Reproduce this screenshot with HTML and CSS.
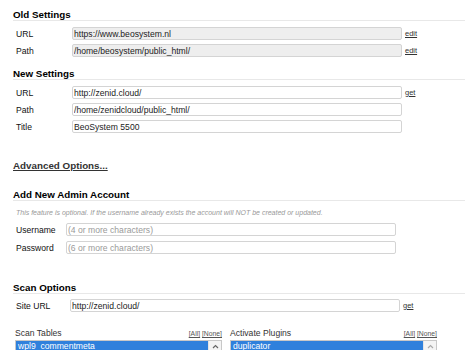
FILE: index.html
```html
<!DOCTYPE html>
<html lang="en">
<head>
    <meta charset="UTF-8">
    <title>Installer - Step 3</title>
    <link rel="stylesheet" href="styles.css">
</head>
<body>
    <h2 class="section-title first">Old Settings</h2>
    <div class="fields">
        <div class="row">
            <label for="old-url">URL</label>
            <input type="text" id="old-url" class="readonly" value="https://www.beosystem.nl" readonly>
            <a href="#" class="small-link">edit</a>
        </div>
        <div class="row">
            <label for="old-path">Path</label>
            <input type="text" id="old-path" class="readonly" value="/home/beosystem/public_html/" readonly>
            <a href="#" class="small-link">edit</a>
        </div>
    </div>

    <h2 class="section-title new-settings">New Settings</h2>
    <div class="fields">
        <div class="row">
            <label for="new-url">URL</label>
            <input type="text" id="new-url" value="http://zenid.cloud/">
            <a href="#" class="small-link">get</a>
        </div>
        <div class="row">
            <label for="new-path">Path</label>
            <input type="text" id="new-path" value="/home/zenidcloud/public_html/">
        </div>
        <div class="row">
            <label for="blogname">Title</label>
            <input type="text" id="blogname" value="BeoSystem 5500">
        </div>
    </div>

    <a href="#" class="advanced-link">Advanced Options...</a>

    <h2 class="section-title admin-title">Add New Admin Account</h2>
    <p class="note">This feature is optional. If the username already exists the account will NOT be created or updated.</p>
    <div class="fields admin-fields">
        <div class="row">
            <label for="admin-user">Username</label>
            <input type="text" id="admin-user" placeholder="(4 or more characters)">
        </div>
        <div class="row">
            <label for="admin-pass">Password</label>
            <input type="text" id="admin-pass" placeholder="(6 or more characters)">
        </div>
    </div>

    <h2 class="section-title scan-title">Scan Options</h2>
    <div class="fields site-fields">
        <div class="row">
            <label for="siteurl">Site URL</label>
            <input type="text" id="siteurl" value="http://zenid.cloud/">
            <a href="#" class="small-link">get</a>
        </div>
    </div>

    <div class="scan-cols">
        <div class="scan-col">
            <div class="col-head">
                <span>Scan Tables</span>
                <span class="toggles"><a href="#">[All]</a> <a href="#">[None]</a></span>
            </div>
            <div class="listbox">
                <div class="options">
                    <div class="option selected">wpl9_commentmeta</div>
                </div>
                <div class="scrollbar">
                    <div class="scroll-btn">
                        <svg width="7" height="5" viewBox="0 0 7 5"><polyline points="1,4 3.5,1.5 6,4" fill="none" stroke="#666" stroke-width="1.2"/></svg>
                    </div>
                </div>
            </div>
        </div>
        <div class="scan-col">
            <div class="col-head">
                <span>Activate Plugins</span>
                <span class="toggles"><a href="#">[All]</a> <a href="#">[None]</a></span>
            </div>
            <div class="listbox">
                <div class="options">
                    <div class="option selected">duplicator</div>
                </div>
                <div class="scrollbar">
                    <div class="scroll-btn">
                        <svg width="7" height="5" viewBox="0 0 7 5"><polyline points="1,4 3.5,1.5 6,4" fill="none" stroke="#aaa" stroke-width="1.2"/></svg>
                    </div>
                </div>
            </div>
        </div>
    </div>
</body>
</html>
```

FILE: styles.css
```css
body {
    margin: 0;
    padding: 0 8px 0 13px;
    font-family: "Liberation Sans", Arial, sans-serif;
    font-size: 8.6px;
    color: #222;
    background-color: #fff;
}

.section-title {
    margin: 0;
    font-size: 9.8px;
    line-height: 11px;
    font-weight: bold;
    color: #000;
    border-bottom: 1px solid #e8e8e8;
}

.section-title.first {
    margin-top: 9px;
}

.section-title.new-settings {
    margin-top: 11px;
}

.section-title.admin-title {
    margin-top: 18px;
}

.section-title.scan-title {
    margin-top: 28px;
}

.fields {
    display: flex;
    flex-direction: column;
    gap: 4px;
    margin-top: 6px;
    padding-left: 3px;
}

.row {
    display: flex;
    align-items: center;
    height: 13px;
}

.row label {
    width: 56px;
    flex-shrink: 0;
    color: #111;
}

.admin-fields {
    margin-top: 5px;
    gap: 5px;
}

.admin-fields .row label {
    width: 50px;
}

.site-fields {
    margin-top: 5px;
}

.site-fields .row label {
    width: 54px;
}

.row input {
    box-sizing: border-box;
    width: 330px;
    height: 13px;
    margin: 0;
    padding: 0 1px;
    border: 1px solid #d4d4d4;
    border-radius: 2px;
    font-family: "Liberation Sans", Arial, sans-serif;
    font-size: 8.6px;
    color: #222;
    background-color: #fff;
    outline: none;
}

.row input.readonly {
    background-color: #eeeeee;
}

.row input::placeholder {
    color: #9a9a9a;
}

.small-link {
    margin-left: 3px;
    color: #333;
    font-size: 7.5px;
}

.advanced-link {
    display: block;
    width: max-content;
    margin-top: 27px;
    font-size: 9.8px;
    line-height: 11px;
    font-weight: bold;
    color: #333;
}

.note {
    margin: 7px 0 0;
    padding-left: 3px;
    font-size: 7px;
    line-height: 10px;
    font-style: italic;
    color: #999;
}

.scan-cols {
    display: flex;
    gap: 8px;
    margin-top: 16px;
    padding-left: 2px;
}

.scan-col {
    width: 207px;
}

.col-head {
    display: flex;
    justify-content: space-between;
    align-items: baseline;
    height: 11px;
    line-height: 11px;
    color: #333;
}

.toggles {
    font-size: 6.8px;
}

.toggles a {
    color: #555;
}

.listbox {
    display: flex;
    height: 60px;
    margin-top: 1px;
    border: 1px solid #c8c8c8;
}

.options {
    flex: 1;
}

.option {
    height: 11px;
    line-height: 11px;
    padding-left: 2px;
}

.option.selected {
    background-color: #2f80dc;
    color: #fff;
}

.scrollbar {
    width: 12px;
    background-color: #f4f4f4;
    border-left: 1px solid #e4e4e4;
}

.scroll-btn {
    display: flex;
    justify-content: center;
    align-items: center;
    height: 11px;
}
```
